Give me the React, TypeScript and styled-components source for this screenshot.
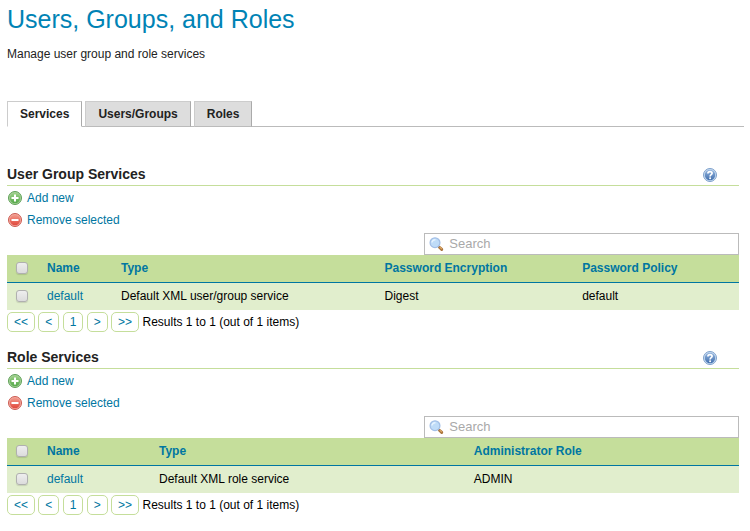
import React, { useId, useState } from "react";
import styled, { createGlobalStyle } from "styled-components";

const GlobalStyle = createGlobalStyle`
  * { box-sizing: border-box; }
  body {
    margin: 0;
    background: #fff;
    color: #222;
    font: 12px/18px "Liberation Sans", Arial, Helvetica, sans-serif;
  }
`;

const Page = styled.main`
  padding: 5px 6px 12px 7px;
`;

const PageTitle = styled.h1`
  margin: 0;
  color: #0083b5;
  font-size: 25px;
  font-weight: normal;
  line-height: 28px;
`;

const Intro = styled.p`
  margin: 12px 0 38px;
`;

const TabBar = styled.div`
  display: flex;
  gap: 3px;
  border-bottom: 1px solid #bbb;
`;

const Tab = styled.button<{ $active: boolean }>`
  height: 26px;
  margin: 0 0 -1px;
  padding: 0 12px;
  border: 1px solid #ccc;
  border-right-color: #aaa;
  border-bottom-color: ${(p) => (p.$active ? "#fff" : "#bbb")};
  background: ${(p) => (p.$active ? "#fff" : "#ddd")};
  color: #222;
  font: inherit;
  font-weight: bold;
  cursor: pointer;
`;

const Panel = styled.div`
  margin: 37px 5px 0 0;
  display: grid;
  gap: 15px;
`;

const SectionHeader = styled.header`
  display: flex;
  align-items: center;
  justify-content: space-between;
  padding-right: 22px;
  border-bottom: 1px solid #c5de9b;
`;

const SectionTitle = styled.h2`
  margin: 0;
  font-size: 14px;
  line-height: 21px;
`;

const HelpLink = styled.a`
  display: flex;
`;

const Actions = styled.ul`
  margin: 1px 0 2px;
  padding: 0;
  list-style: none;
`;

const Action = styled.a`
  display: flex;
  align-items: center;
  gap: 5px;
  width: fit-content;
  height: 22px;
  padding-left: 1px;
  color: #0076a1;
  text-decoration: none;
`;

const SearchBox = styled.label`
  display: flex;
  align-items: center;
  gap: 5px;
  width: 43%;
  height: 22px;
  margin-left: auto;
  padding: 0 4px;
  border: 1px solid #bbb;
`;

const SearchInput = styled.input`
  flex: 1;
  min-width: 0;
  padding: 0;
  border: 0;
  outline: 0;
  background: none;
  font: inherit;
  font-size: 13px;
  &::placeholder {
    color: #a9a9a9;
    opacity: 1;
  }
`;

const Table = styled.table`
  width: 100%;
  table-layout: fixed;
  border-collapse: separate;
  border-spacing: 0;

  th,
  td {
    padding: 0 0 2px 10px;
  }
  th:first-child,
  td:first-child {
    padding-left: 9px;
  }
`;

const HeadCell = styled.th<{ $width?: string }>`
  width: ${(p) => p.$width ?? "auto"};
  height: 28px;
  border-bottom: 1px solid #0076a1;
  background: #c5de9b;
  text-align: left;
`;

const Cell = styled.td`
  height: 27px;
  background: #e1eecd;
  color: #000;
`;

const Link = styled.a`
  color: #0076a1;
  text-decoration: none;
`;

const Check = styled.input`
  appearance: none;
  display: block;
  width: 12px;
  height: 12px;
  margin: 0;
  border: 1px solid #b0b0b0;
  border-radius: 3px;
  background: linear-gradient(#eee, #dcdcdc);
  box-shadow: 0 1px 1px rgba(0, 0, 0, 0.12);
  &:checked {
    background: #0076a1;
  }
`;

const Pager = styled.nav`
  margin-top: 2px;
  color: #000;
  line-height: 20px;
`;

const PageButton = styled.button`
  height: 20px;
  padding: 0 6px;
  border: 1px solid #c5de9b;
  border-radius: 5px;
  background: #fff;
  color: #0076a1;
  font: inherit;
  line-height: 18px;
  vertical-align: top;
  cursor: pointer;
`;

function RoundIcon({ kind }: { kind: "add" | "remove" | "help" }) {
  const id = useId();
  const [edge, ring, light, dark] = {
    add: ["#5d9f55", "#a9d29b", "#9bd087", "#56a94b"],
    remove: ["#cb5a50", "#f3aaa0", "#f39a8c", "#e0483c"],
    help: ["#7d9fcb", "#c9ddf1", "#94b5de", "#416fae"],
  }[kind];
  return (
    <svg width="14" height="14" viewBox="0 0 14 14" aria-hidden="true">
      <defs>
        <linearGradient id={id} x1="0" y1="0" x2="0" y2="1">
          <stop offset="0" stopColor={light} />
          <stop offset="1" stopColor={dark} />
        </linearGradient>
      </defs>
      <circle cx="7" cy="7" r="6.5" fill={ring} stroke={edge} />
      <circle cx="7" cy="7" r="5.2" fill={`url(#${id})`} />
      {kind === "add" && <path d="M7 3.5v7M3.5 7h7" stroke="#fff" strokeWidth="2" />}
      {kind === "remove" && <path d="M3.5 7h7" stroke="#fff" strokeWidth="2" />}
      {kind === "help" && (
        <>
          <path d="M4.9 5.5C4.9 3.1 9.1 3.1 9.1 5.2 9.1 6.7 7.1 6.5 7.1 8.4" fill="none" stroke="#fff" strokeWidth="1.7" />
          <circle cx="7.1" cy="10.3" r="1" fill="#fff" />
        </>
      )}
    </svg>
  );
}

function SearchIcon() {
  return (
    <svg width="15" height="15" viewBox="0 0 15 15" aria-hidden="true">
      <path d="M9.2 9.2l1.5 1.5" stroke="#999" strokeWidth="2" />
      <path d="M10.7 10.5l2 1.9" stroke="#a9743c" strokeWidth="3" strokeLinecap="round" />
      <path d="M10.8 10l2 2" stroke="#dfa967" strokeWidth="1.1" />
      <circle cx="6" cy="5.7" r="4.9" fill="#bfdcf8" stroke="#a3bfe6" strokeWidth="1.3" />
      <path d="M3 5.5C3.2 3.6 4.6 2.5 6.5 2.7" fill="none" stroke="#e6f3ff" strokeWidth="1.5" />
    </svg>
  );
}

type Column = { label: string; width?: string };
type ServiceProps = { title: string; columns: Column[]; row: string[] };

function ServiceSection({ title, columns, row }: ServiceProps) {
  return (
    <section>
      <SectionHeader>
        <SectionTitle>{title}</SectionTitle>
        <HelpLink href="#help" aria-label={`Help: ${title}`}>
          <RoundIcon kind="help" />
        </HelpLink>
      </SectionHeader>
      <Actions>
        <li>
          <Action href="#add"><RoundIcon kind="add" />Add new</Action>
        </li>
        <li>
          <Action href="#remove"><RoundIcon kind="remove" />Remove selected</Action>
        </li>
      </Actions>
      <SearchBox>
        <SearchIcon />
        <SearchInput type="text" placeholder="Search" aria-label={`Search ${title}`} />
      </SearchBox>
      <Table>
        <thead>
          <tr>
            <HeadCell $width="30px"><Check type="checkbox" aria-label="Select all" /></HeadCell>
            {columns.map((c) => (
              <HeadCell key={c.label} $width={c.width}><Link href="#sort">{c.label}</Link></HeadCell>
            ))}
          </tr>
        </thead>
        <tbody>
          <tr>
            <Cell><Check type="checkbox" aria-label={`Select ${row[0]}`} /></Cell>
            {row.map((value, i) => (
              <Cell key={i}>{i === 0 ? <Link href="#service">{value}</Link> : value}</Cell>
            ))}
          </tr>
        </tbody>
      </Table>
      <Pager aria-label={`${title} pages`}>
        {["<<", "<", "1", ">", ">>"].map((label) => (
          <React.Fragment key={label}>
            <PageButton type="button">{label}</PageButton>{" "}
          </React.Fragment>
        ))}
        Results 1 to 1 (out of 1 items)
      </Pager>
    </section>
  );
}

const tabs = ["Services", "Users/Groups", "Roles"];

const services: ServiceProps[] = [
  {
    title: "User Group Services",
    columns: [
      { label: "Name", width: "74px" },
      { label: "Type", width: "36%" },
      { label: "Password Encryption", width: "27%" },
      { label: "Password Policy" },
    ],
    row: ["default", "Default XML user/group service", "Digest", "default"],
  },
  {
    title: "Role Services",
    columns: [
      { label: "Name", width: "112px" },
      { label: "Type", width: "43%" },
      { label: "Administrator Role" },
    ],
    row: ["default", "Default XML role service", "ADMIN"],
  },
];

export default function App() {
  const [active, setActive] = useState(tabs[0]);
  return (
    <>
      <GlobalStyle />
      <Page>
        <PageTitle>Users, Groups, and Roles</PageTitle>
        <Intro>Manage user group and role services</Intro>
        <TabBar role="tablist">
          {tabs.map((tab) => (
            <Tab
              key={tab}
              type="button"
              role="tab"
              aria-selected={tab === active}
              $active={tab === active}
              onClick={() => setActive(tab)}
            >
              {tab}
            </Tab>
          ))}
        </TabBar>
        <Panel role="tabpanel">
          {services.map((service) => (
            <ServiceSection key={service.title} {...service} />
          ))}
        </Panel>
      </Page>
    </>
  );
}
